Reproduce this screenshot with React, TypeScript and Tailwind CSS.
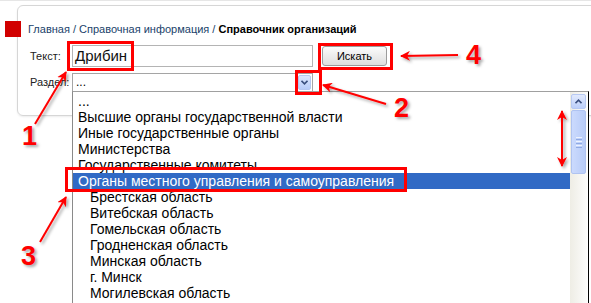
import { FC } from 'react';

type Item = { label: string; indent?: boolean; active?: boolean };

const items: Item[] = [
  { label: '...' },
  { label: 'Высшие органы государственной власти' },
  { label: 'Иные государственные органы' },
  { label: 'Министерства' },
  { label: 'Государственные комитеты' },
  { label: 'Органы местного управления и самоуправления', active: true },
  { label: 'Брестская область', indent: true },
  { label: 'Витебская область', indent: true },
  { label: 'Гомельская область', indent: true },
  { label: 'Гродненская область', indent: true },
  { label: 'Минская область', indent: true },
  { label: 'г. Минск', indent: true },
  { label: 'Могилевская область', indent: true },
];

// стрелки-пометки поверх скриншота
const Arrows: FC = () => (
  <svg className="absolute inset-0 pointer-events-none" width="591" height="303">
    <defs>
      <filter id="sh" x="-20%" y="-20%" width="140%" height="140%">
        <feDropShadow dx="2" dy="2" stdDeviation="1.5" floodColor="#000" floodOpacity="0.35" />
      </filter>
      <marker id="head" viewBox="0 0 10 10" refX="9" refY="5" markerWidth="5" markerHeight="5" orient="auto-start-reverse">
        <path d="M0,0 L10,5 L0,10 L3,5 z" fill="#f00" />
      </marker>
    </defs>
    <g stroke="#f00" strokeWidth="2" fill="none" filter="url(#sh)">
      <line x1="35" y1="124" x2="66" y2="72" markerEnd="url(#head)" />
      <line x1="386" y1="104" x2="323" y2="85" markerEnd="url(#head)" />
      <line x1="40" y1="242" x2="66" y2="197" markerEnd="url(#head)" />
      <line x1="458" y1="55" x2="401" y2="56" markerEnd="url(#head)" />
      <line x1="562" y1="111" x2="562" y2="166" markerStart="url(#head)" markerEnd="url(#head)" />
    </g>
  </svg>
);

const Num: FC<{ n: string; className: string }> = ({ n, className }) => (
  <span
    className={`absolute text-[27px] leading-none font-bold text-[#f00] [text-shadow:2px_2px_3px_rgba(0,0,0,0.35)] ${className}`}
  >
    {n}
  </span>
);

export default function App() {
  return (
    <div className="relative w-[591px] h-[303px] overflow-hidden bg-white font-['Liberation_Sans',Arial,sans-serif] text-black">
      <div className="h-px bg-[#e6e6e6]" />

      {/* панель поиска */}
      <div className="ml-[17px] mt-[4px] w-[600px] h-[111px] rounded-[6px] border border-[#d6d6d6] shadow-[0_1px_2px_rgba(0,0,0,0.08)] pt-[15px]">
        <div className="flex items-center h-4">
          <div className="-ml-[13px] w-4 h-4 bg-[#d10000]" />
          <div className="ml-[7px] text-[11px] text-[#203f6a]">
            Главная / Справочная информация / <b className="text-black">Справочник организаций</b>
          </div>
        </div>

        <div className="mt-[8px] flex items-center h-[22px]">
          <span className="w-[54px] pl-[12px] text-[11px] text-[#222]">Текст:</span>
          <div className="w-[241px] h-[22px] border border-[#b4b4b4] flex items-center pl-[2px] text-[15px] font-normal text-[#111]">
            Дрибин
          </div>
          <button className="ml-[9px] w-[65px] h-[20px] rounded-[3px] border border-[#9c9c9c] bg-gradient-to-b from-[#fbfbfb] to-[#dedede] text-[11px]">
            Искать
          </button>
        </div>

        <div className="mt-[6px] flex items-center h-[18px]">
          <span className="w-[54px] pl-[12px] text-[11px] text-[#222]">Раздел:</span>
          <div className="w-[241px] h-[18px] border border-b-0 border-[#a5a5a5] flex items-center justify-between pl-[3px] pr-[1px] text-[12px]">
            <span className="-mt-[2px]">...</span>
            <span className="w-[13px] h-[15px] rounded-[2px] border border-[#b6c8f2] bg-gradient-to-b from-[#dde7fd] to-[#b8ccf9] flex items-center justify-center">
              <svg width="7" height="5" viewBox="0 0 7 5">
                <path d="M0.5 0.8 L3.5 3.8 L6.5 0.8" stroke="#3a4f7f" strokeWidth="1.6" fill="none" />
              </svg>
            </span>
          </div>
        </div>
      </div>

      {/* раскрытый список */}
      <div className="absolute left-[72px] top-[91px] w-[517px] h-[230px] bg-white border-l border-t border-r border-l-[#8a8a8a] border-t-[#a0a0a0] border-r-black flex">
        <div className="w-[497px] pt-[1px]">
          {items.map(item => (
            <div
              key={item.label}
              className={`h-4 leading-4 text-[14px] whitespace-nowrap ${item.indent ? 'pl-[17px]' : 'pl-[5px]'} ${item.active ? 'bg-[#316ac5] text-white' : ''}`}
            >
              {item.label}
            </div>
          ))}
        </div>
        <div className="w-[17px] bg-gradient-to-r from-[#eeede5] to-[#fcfcfb] pt-[2px] px-[1px] flex flex-col">
          <div className="h-[15px] rounded-[2px] border border-[#b7c9f3] bg-gradient-to-b from-[#e2eafd] to-[#bccffa] flex items-center justify-center">
            <svg width="7" height="5" viewBox="0 0 7 5">
              <path d="M0.5 4.2 L3.5 1.2 L6.5 4.2" stroke="#3a4f7f" strokeWidth="1.6" fill="none" />
            </svg>
          </div>
          <div className="mt-[1px] h-[64px] rounded-[2px] border border-[#afc3f1] bg-gradient-to-r from-[#cbdafd] to-[#b8ccf8] flex flex-col items-center justify-center gap-[1px]">
            <div className="w-[6px] h-px bg-[#eef3fe]" />
            <div className="w-[6px] h-px bg-[#8fa9e4]" />
            <div className="w-[6px] h-px bg-[#eef3fe]" />
            <div className="w-[6px] h-px bg-[#8fa9e4]" />
            <div className="w-[6px] h-px bg-[#eef3fe]" />
            <div className="w-[6px] h-px bg-[#8fa9e4]" />
          </div>
        </div>
      </div>

      {/* пометки */}
      <div className="absolute left-[67px] top-[41px] w-[67px] h-[30px] border-[3px] border-[#f00]" />
      <div className="absolute left-[295px] top-[70px] w-[27px] h-[25px] border-[3px] border-[#f00]" />
      <div className="absolute left-[65px] top-[167px] w-[342px] h-[25px] border-[3px] border-[#f00]" />
      <div className="absolute left-[318px] top-[43px] w-[75px] h-[27px] border-[3px] border-[#f00]" />
      <Arrows />
      <Num n="1" className="left-[22px] top-[123px]" />
      <Num n="2" className="left-[394px] top-[95px]" />
      <Num n="3" className="left-[21px] top-[243px]" />
      <Num n="4" className="left-[466px] top-[42px]" />
    </div>
  );
}
